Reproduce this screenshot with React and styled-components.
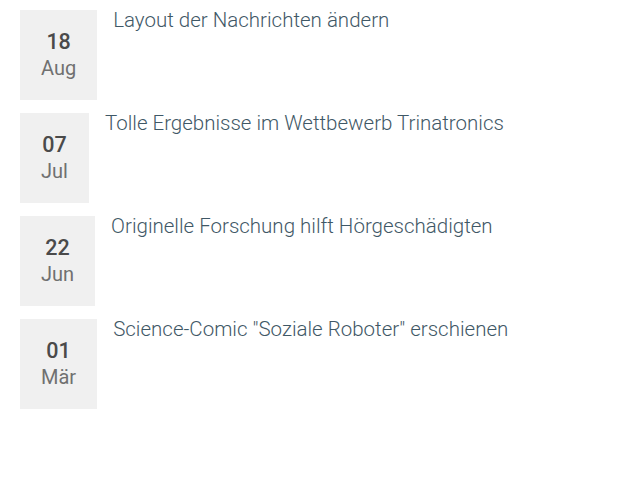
import styled, { createGlobalStyle } from "styled-components"

const GlobalStyle = createGlobalStyle`
  body {
    margin: 0;
    background: #fff;
    font-family: Roboto, "Liberation Sans", sans-serif;
  }
`

const NewsList = styled.ul`
  list-style: none;
  margin: 0;
  padding: 10px 20px;
  display: flex;
  flex-direction: column;
  gap: 13px;
`

const NewsItem = styled.li`
  display: flex;
  align-items: flex-start;
  gap: 16px;
`

const DateBox = styled.div`
  display: flex;
  flex-direction: column;
  align-items: center;
  height: 90px;
  padding: 20px 21px 0;
  box-sizing: border-box;
  background: #f0f0f0;
`

const Day = styled.span`
  font-size: 21.5px;
  font-weight: 500;
  color: #4a4a4a;
  line-height: 24px;
`

const Month = styled.span`
  font-size: 20px;
  font-weight: 400;
  color: #707070;
  line-height: 22px;
  margin-top: 3px;
`

const Title = styled.a`
  font-size: 20.5px;
  font-weight: 300;
  color: #3f5866;
  text-decoration: none;
  line-height: 24px;
  margin-top: -2px;
`

const news = [
  { day: "18", month: "Aug", title: "Layout der Nachrichten ändern" },
  { day: "07", month: "Jul", title: "Tolle Ergebnisse im Wettbewerb Trinatronics" },
  { day: "22", month: "Jun", title: "Originelle Forschung hilft Hörgeschädigten" },
  { day: "01", month: "Mär", title: "Science-Comic \"Soziale Roboter\" erschienen" },
]

export default function App() {
  return (
    <>
      <GlobalStyle />
      <NewsList>
        {news.map((n) => (
          <NewsItem key={n.title}>
            <DateBox>
              <Day>{n.day}</Day>
              <Month>{n.month}</Month>
            </DateBox>
            <Title href="#">{n.title}</Title>
          </NewsItem>
        ))}
      </NewsList>
    </>
  )
}
